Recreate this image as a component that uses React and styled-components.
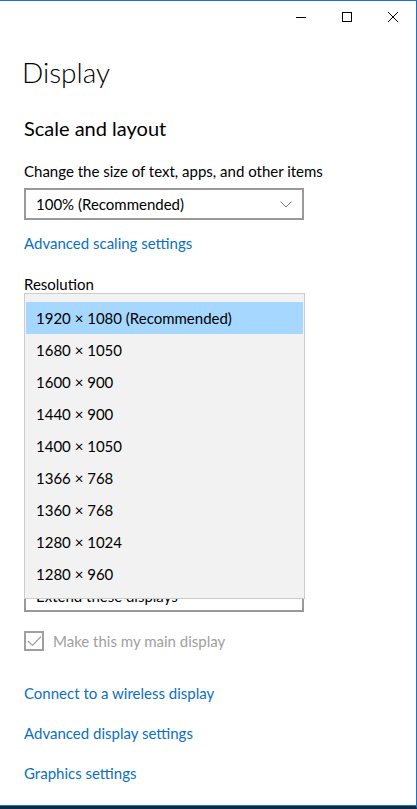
import styled, { createGlobalStyle } from 'styled-components';

const GlobalStyle = createGlobalStyle`
  html, body {
    margin: 0;
    padding: 0;
    background: #ffffff;
  }
  body {
    font-family: "Segoe UI", Lato, "Noto Sans", sans-serif;
    color: #000;
  }
`;

const resolutions = [
  '1920 × 1080 (Recommended)',
  '1680 × 1050',
  '1600 × 900',
  '1440 × 900',
  '1400 × 1050',
  '1366 × 768',
  '1360 × 768',
  '1280 × 1024',
  '1280 × 960',
];

function Chevron() {
  return (
    <svg width="12" height="7" viewBox="0 0 12 7">
      <path d="M0.5 0.5 L6 6 L11.5 0.5" fill="none" stroke="#7a7a7a" strokeWidth="1" />
    </svg>
  );
}

function App() {
  return (
    <>
      <GlobalStyle />
      <Window>
        <TitleBar>
          <ControlButton aria-label="Minimize">
            <svg width="10" height="10" viewBox="0 0 10 10">
              <path d="M0 5.5 H10" stroke="#000" strokeWidth="1" />
            </svg>
          </ControlButton>
          <ControlButton aria-label="Maximize">
            <svg width="10" height="10" viewBox="0 0 10 10">
              <rect x="0.5" y="0.5" width="9" height="9" fill="none" stroke="#000" strokeWidth="1" />
            </svg>
          </ControlButton>
          <ControlButton aria-label="Close">
            <svg width="10" height="10" viewBox="0 0 10 10">
              <path d="M0 0 L10 10 M10 0 L0 10" stroke="#000" strokeWidth="1" />
            </svg>
          </ControlButton>
        </TitleBar>

        <Content>
          <PageTitle>Display</PageTitle>
          <SectionTitle>Scale and layout</SectionTitle>

          <FieldLabel $top={19}>Change the size of text, apps, and other items</FieldLabel>
          <ComboBox $top={7}>
            <span>100% (Recommended)</span>
            <Chevron />
          </ComboBox>
          <Link $top={13}>Advanced scaling settings</Link>

          <FieldLabel $top={21}>Resolution</FieldLabel>
          {/* the open list covers the rest of the layout section */}
          <Covered>
            <ComboBox>
              <span>Extend these displays</span>
              <Chevron />
            </ComboBox>

            <Popup>
              {resolutions.map((r, i) => (
                <PopupItem key={r} $selected={i === 0}>
                  {r}
                </PopupItem>
              ))}
            </Popup>
          </Covered>

          <CheckRow>
            <CheckBox>
              <svg width="15" height="12" viewBox="0 0 15 12">
                <path d="M1 6 L5.5 10.5 L14 1.5" fill="none" stroke="#a0a0a0" strokeWidth="1.2" />
              </svg>
            </CheckBox>
            <CheckLabel>Make this my main display</CheckLabel>
          </CheckRow>

          <Link $top={32}>Connect to a wireless display</Link>
          <Link $top={20}>Advanced display settings</Link>
          <Link $top={20}>Graphics settings</Link>
        </Content>
      </Window>
    </>
  );
}

const Window = styled.div`
  position: relative;
  box-sizing: border-box;
  width: 417px;
  height: 809px;
  overflow: hidden;
  background: #ffffff;
  border-top: 1px solid #1a73c9;
  border-right: 1px solid #1a73c9;
  border-bottom: 3px solid #102a44;
  box-shadow: inset 0 -1px 0 #1a73c9;
  display: flex;
  flex-direction: column;
`;

const TitleBar = styled.div`
  display: flex;
  justify-content: flex-end;
  height: 31px;
  flex-shrink: 0;
`;

const ControlButton = styled.button`
  width: 46px;
  height: 31px;
  border: none;
  background: transparent;
  display: flex;
  align-items: center;
  justify-content: center;
  padding: 0;
  cursor: pointer;
`;

const Content = styled.div`
  display: flex;
  flex-direction: column;
  align-items: flex-start;
  padding: 0 0 0 24px;
`;

const PageTitle = styled.h1`
  margin: 22px 0 0 -2px;
  font-size: 28px;
  font-weight: 300;
  line-height: 36px;
`;

const SectionTitle = styled.h2`
  margin: 24px 0 0 0;
  font-size: 20px;
  font-weight: 400;
  line-height: 28px;
`;

const FieldLabel = styled.div`
  margin-top: ${(p) => p.$top ?? 20}px;
  font-size: 15px;
  line-height: 20px;
`;

const ComboBox = styled.div`
  box-sizing: border-box;
  margin-top: ${(p) => p.$top ?? 0}px;
  width: 280px;
  height: 32px;
  border: 2px solid #999999;
  background: #ffffff;
  display: flex;
  align-items: center;
  justify-content: space-between;
  padding: 0 10px 0 10px;
  font-size: 15px;
`;

const Link = styled.a`
  margin-top: ${(p) => p.$top ?? 16}px;
  font-size: 15px;
  line-height: 20px;
  color: #0a6fc4;
  cursor: pointer;
`;

const Covered = styled.div`
  position: relative;
  box-sizing: border-box;
  height: 312px;
  margin-top: 6px;
  display: flex;
  flex-direction: column;
  justify-content: flex-end;
`;

const Popup = styled.ul`
  position: absolute;
  top: -7px;
  left: 0;
  box-sizing: border-box;
  width: 281px;
  margin: 0;
  padding: 8px 1px;
  list-style: none;
  background: #f2f2f2;
  border: 1px solid #cccccc;
`;

const PopupItem = styled.li`
  height: 32px;
  display: flex;
  align-items: center;
  padding-left: 10px;
  font-size: 15px;
  background: ${(p) => (p.$selected ? '#a6d8ff' : 'transparent')};
`;

const CheckRow = styled.div`
  margin-top: 19px;
  display: flex;
  align-items: center;
  gap: 9px;
`;

const CheckBox = styled.div`
  box-sizing: border-box;
  width: 20px;
  height: 20px;
  border: 2px solid #a0a0a0;
  display: flex;
  align-items: center;
  justify-content: center;
`;

const CheckLabel = styled.span`
  font-size: 15px;
  color: #a0a0a0;
`;

export default App;
